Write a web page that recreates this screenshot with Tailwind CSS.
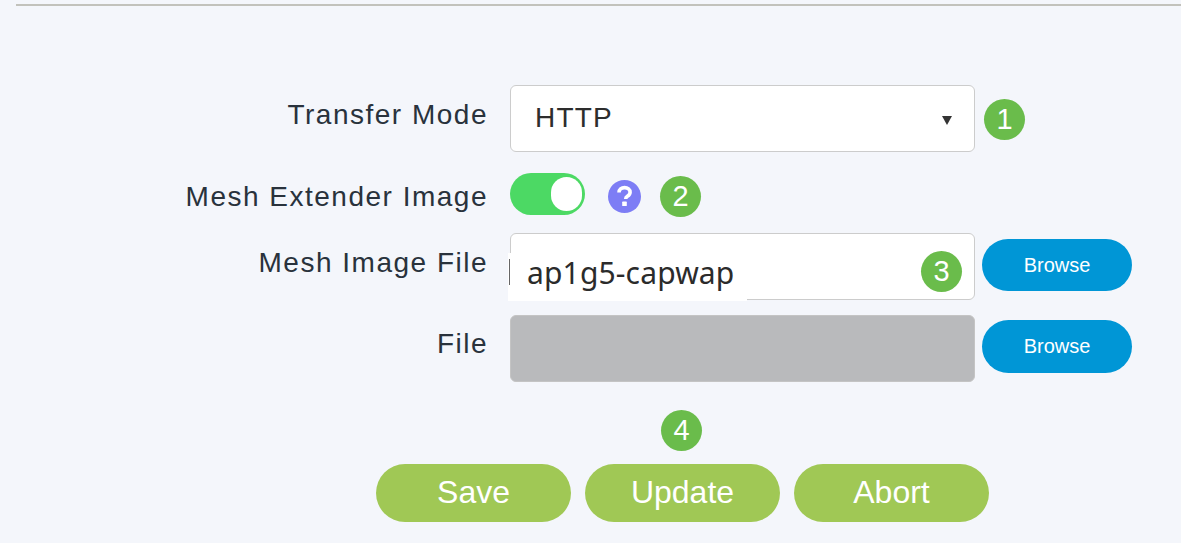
<!DOCTYPE html>
<html>
<head>
<meta charset="utf-8">
<script src="https://cdn.jsdelivr.net/npm/@tailwindcss/browser@4"></script>
</head>
<body class="m-0 bg-[#f4f6fb] font-['Liberation_Sans',sans-serif]">
<div class="relative w-[1181px] h-[543px] overflow-hidden">
  <div class="ml-4 mt-1 h-[2px] bg-[#c2c2bc]"></div>

  <div class="flex flex-col mt-[79px]">
    <div class="flex items-start h-[67px]">
      <div class="w-[488px] shrink-0 text-right text-[28px] leading-[30px] pt-[15px] tracking-[1.5px] text-[#29323c]">Transfer Mode</div>
      <div class="relative ml-[22px] w-[465px] h-[67px] bg-white border border-[#cccccc] rounded-[6px] flex items-center justify-between pl-6 pr-[22px]">
        <span class="text-[28px] tracking-[1.2px] text-[#2d2d2d] -mt-[2px]">HTTP</span>
        <svg width="10" height="9" viewBox="0 0 10 9" class="mt-1"><path d="M0 0h10L5 9z" fill="#333"/></svg>
      </div>
      <div class="ml-[9px] mt-[14px] w-[41px] h-[41px] rounded-full bg-[#6abc4b] text-white text-[29px] flex items-center justify-center">1</div>
    </div>

    <div class="flex items-start h-[42px] mt-[21px]">
      <div class="w-[488px] shrink-0 text-right text-[28px] leading-[30px] pt-[9px] tracking-[1.5px] text-[#29323c]">Mesh Extender Image</div>
      <div class="relative ml-[22px] w-[75px] h-[42px] rounded-full bg-[#4cd964]">
        <div class="absolute right-[3px] top-[4px] w-[31px] h-[34px] rounded-full bg-white"></div>
      </div>
      <svg width="33" height="33" viewBox="0 0 33 33" class="ml-[23px] mt-[7px]">
        <circle cx="16.5" cy="16.5" r="16.5" fill="#7d7df5"/>
        <path d="M11 12.6c0-3 2.4-5 5.6-5 3.1 0 5.5 1.9 5.5 4.6 0 2.2-1.3 3.2-2.7 4.1-1.2.8-1.7 1.3-1.7 2.6" fill="none" stroke="#fff" stroke-width="3.6"/>
        <rect x="14.2" y="21.6" width="4.6" height="4.4" rx=".6" fill="#fff"/>
      </svg>
      <div class="ml-[19px] mt-[3px] w-[41px] h-[41px] rounded-full bg-[#6abc4b] text-white text-[29px] flex items-center justify-center">2</div>
    </div>

    <div class="flex items-start h-[67px] mt-[18px]">
      <div class="w-[488px] shrink-0 text-right text-[28px] leading-[30px] pt-[15px] tracking-[1.5px] text-[#29323c]">Mesh Image File</div>
      <div class="relative ml-[22px] w-[465px] h-[67px] bg-white border border-[#cccccc] rounded-[6px]">
        <div class="absolute left-[-3px] top-[19px] w-[239px] h-[48px] bg-white flex items-center pl-[19px]">
          <span class="absolute left-[1px] top-[6px] w-[1px] h-[26px] bg-[#666]"></span>
          <span class="font-['Noto_Sans',sans-serif] text-[30px] tracking-[0.15px] leading-[36px] text-[#2b2b2b] -mt-[9px]">ap1g5-capwap</span>
        </div>
        <div class="absolute left-[410px] top-[17px] w-[41px] h-[41px] rounded-full bg-[#6abc4b] text-white text-[29px] flex items-center justify-center">3</div>
      </div>
      <button class="ml-[7px] mt-[6px] w-[150px] h-[52px] rounded-full bg-[#0096d6] text-white text-[20px]">Browse</button>
    </div>

    <div class="flex items-start h-[67px] mt-[15px]">
      <div class="w-[488px] shrink-0 text-right text-[28px] leading-[30px] pt-[14px] tracking-[1.5px] text-[#29323c]">File</div>
      <div class="ml-[22px] w-[465px] h-[67px] bg-[#b9babc] border border-[#c4c4c4] rounded-[6px]"></div>
      <button class="ml-[7px] mt-[5px] w-[150px] h-[53px] pb-[2px] rounded-full bg-[#0096d6] text-white text-[20px]">Browse</button>
    </div>

    <div class="ml-[661px] mt-[28px] w-[41px] h-[41px] rounded-full bg-[#6abc4b] text-white text-[29px] flex items-center justify-center">4</div>

    <div class="flex gap-[14px] ml-[376px] mt-[13px]">
      <button class="w-[195px] h-[58px] pb-[2px] rounded-full bg-[#a0c855] text-white text-[32px]">Save</button>
      <button class="w-[195px] h-[58px] pb-[2px] rounded-full bg-[#a0c855] text-white text-[32px]">Update</button>
      <button class="w-[195px] h-[58px] pb-[2px] rounded-full bg-[#a0c855] text-white text-[32px]">Abort</button>
    </div>
  </div>
</div>
</body>
</html>
